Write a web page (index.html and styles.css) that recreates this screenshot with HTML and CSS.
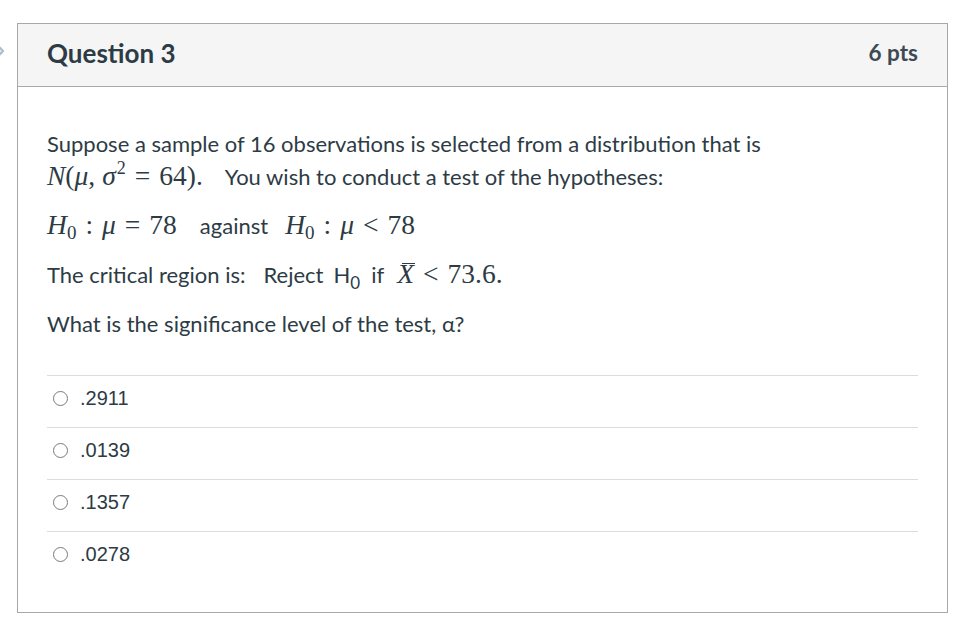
FILE: index.html
```html
<!DOCTYPE html>
<html>
<head>
<meta charset="utf-8">
<link rel="stylesheet" href="styles.css">
</head>
<body>
<svg class="chevron" width="10" height="16" viewBox="0 0 10 16"><path d="M1 2 L7 8 L1 14" fill="none" stroke="#aebfcc" stroke-width="2.4" stroke-linecap="round" stroke-linejoin="round"/></svg>
<div class="card">
  <div class="header">
    <span class="title">Question 3</span>
    <span class="pts">6 pts</span>
  </div>
  <div class="body">
    <p class="p">Suppose a sample of 16 observations is selected from a distribution that is<br><span class="m"><i>N</i>(<i>μ</i>,<span class="sp"></span><i>σ</i><sup>2</sup><span class="rel">=</span>64).</span><span class="g16"></span>You wish to conduct a test of the hypotheses:</p>
    <p class="p"><span class="m"><i>H</i><sub>0</sub><span class="rel">:</span><i>μ</i><span class="rel">=</span>78</span><span class="gap"></span>against<span class="gap2"></span><span class="m"><i>H</i><sub>0</sub><span class="rel">:</span><i>μ</i><span class="rel">&lt;</span>78</span></p>
    <p class="p">The critical region is:<span class="g18"></span>Reject<span class="g10"></span>H<sub class="ss">0</sub><span class="g11"></span>if<span class="g13"></span><span class="m"><i class="xbar">X</i><span class="rel">&lt;</span>73.6.</span></p>
    <p class="p">What is the significance level of the test, α?</p>
    <div class="answers">
      <div class="ans"><span class="radio"></span><span class="lbl">.2911</span></div>
      <div class="ans"><span class="radio"></span><span class="lbl">.0139</span></div>
      <div class="ans"><span class="radio"></span><span class="lbl">.1357</span></div>
      <div class="ans last"><span class="radio"></span><span class="lbl">.0278</span></div>
    </div>
  </div>
</div>
</body>
</html>
```
FILE: styles.css
```css
html, body { margin: 0; padding: 0; background: #fff; }
body { font-family: Lato, "Open Sans", sans-serif; color: #2d3b45; }
.chevron { position: absolute; left: -4px; top: 43px; }
.card {
  margin: 23px 16px 0 17px;
  border: 1px solid #a8a8a8;
  height: 590px;
  box-sizing: border-box;
}
.header {
  background: #f5f5f5;
  border-bottom: 1px solid #a8a8a8;
  height: 63px;
  box-sizing: border-box;
  display: flex;
  align-items: center;
  justify-content: space-between;
  padding: 0 29px 5px 29px;
}
.title { font-size: 26px; font-weight: 700; }
.pts { font-size: 22.5px; font-weight: 700; color: #3d4a54; }
.body { padding: 40px 29px 0 29px; }
.p { margin: 0 0 16px 0; font-size: 22px; line-height: 33px; height: 33px; white-space: nowrap; }
.p:first-child { height: 66px; }
.m { font-family: "Liberation Serif", "DejaVu Serif", serif; font-size: 27.5px; line-height: 20px; color: #2d3b45; }
.m i { font-style: italic; }
.m sup { font-size: 18px; vertical-align: 11px; line-height: 0; margin-left: 1px; }
.m sub { font-size: 19px; vertical-align: -5px; line-height: 0; font-style: normal; }
.rel { margin: 0 9px; }
.sp { display: inline-block; width: 7px; }
.gap { display: inline-block; width: 23px; }
.gap2 { display: inline-block; width: 17px; }
.g16 { display: inline-block; width: 22px; }
.g18 { display: inline-block; width: 18px; }
.g10 { display: inline-block; width: 10px; }
.g11 { display: inline-block; width: 11px; }
.g13 { display: inline-block; width: 13px; }
.ss { font-size: 17px; vertical-align: -6px; line-height: 0; }
.xbar { position: relative; display: inline-block; line-height: 30px; }
.xbar::after { content: ""; position: absolute; left: 5px; top: 4px; width: 13px; height: 1.4px; background: #2d3b45; }
.answers { margin-top: 35px; }
.ans {
  border-top: 1px solid #dcdcdc;
  height: 52px;
  box-sizing: border-box;
  display: flex;
  align-items: center;
  padding: 0 0 6px 6px;
}
.radio {
  width: 13px; height: 13px;
  border: 1.3px solid #7a7a7a;
  border-radius: 50%;
  margin-right: 12px;
}
.lbl { font-family: "Liberation Sans", Arial, sans-serif; font-size: 20px; color: #2d3b45; }
```
